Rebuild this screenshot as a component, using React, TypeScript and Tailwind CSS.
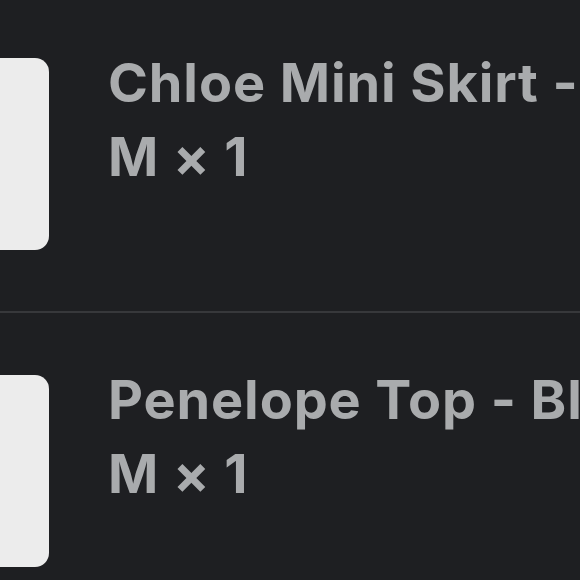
export default function App() {
  const items = [
    { name: "Chloe Mini Skirt - Black", qty: "M × 1" },
    { name: "Penelope Top - Black", qty: "M × 1" },
  ];
  return (
    <div
      className="w-[580px] h-[580px] overflow-hidden bg-[#1e1f22]"
      style={{ fontFamily: "Inter, 'Liberation Sans', sans-serif" }}
    >
      <div className="pt-[58px] flex flex-col">
        {items.map((it, i) => (
          <div key={i} className="flex flex-col">
            {i > 0 && <div className="h-[2px] bg-[#37383b] mb-[62px]" />}
            <div className="flex items-start gap-[59px] h-[192px] mb-[61px]">
              <div className="shrink-0 w-[100px] ml-[-51px] h-[192px] rounded-[14px] bg-[#ececec]" />
              <div className="flex flex-col whitespace-nowrap text-[#a9abad] font-bold text-[54px] leading-[74px] tracking-[0.9px] -mt-[12px]">
                <span>{it.name}</span>
                <span>{it.qty}</span>
              </div>
            </div>
          </div>
        ))}
      </div>
    </div>
  );
}
